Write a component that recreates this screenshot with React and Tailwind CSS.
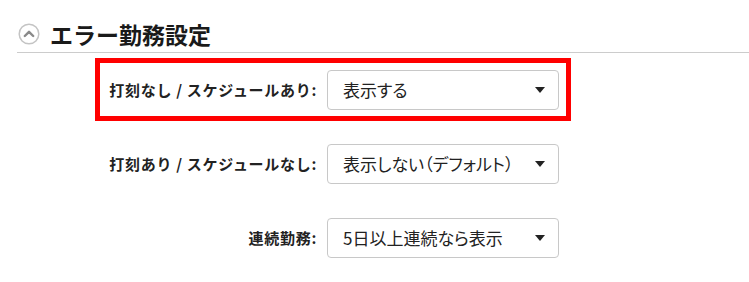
import React from "react";

const font = { fontFamily: '"Noto Sans CJK JP", "Noto Sans", sans-serif' };

function Caret() {
  return (
    <svg width="10" height="6" viewBox="0 0 10 6" className="shrink-0">
      <path d="M0 0 L10 0 L5 6 Z" fill="#222" />
    </svg>
  );
}

function Row({ label, value, highlight }) {
  return (
    <div
      className={`flex items-center w-[476px] h-[63px] border-[5px] ${
        highlight ? "border-[#ff0000]" : "border-transparent"
      }`}
    >
      <div className="w-[217px] shrink-0 text-right text-[15px] font-bold text-[#222] leading-none tracking-[0.7px] whitespace-nowrap">
        {label}
      </div>
      <div className="ml-[10px] w-[232px] h-[40px] shrink-0 flex items-center justify-between pl-[15px] pr-[13px] border border-[#c8c8c8] rounded-[4px] bg-white">
        <span className="text-[17px] text-[#222] leading-none whitespace-nowrap [font-feature-settings:'palt']">
          {value}
        </span>
        <Caret />
      </div>
    </div>
  );
}

export default function App() {
  return (
    <div className="w-[749px] h-[282px] bg-white overflow-hidden" style={font}>
      <div className="ml-[17px] pt-[20px] pb-[4px] border-b border-[#cccccc]">
        <div className="flex items-center h-[28px]">
          <svg width="22" height="22" viewBox="0 0 22 22" className="ml-[1px] shrink-0">
            <circle cx="11" cy="11" r="9.8" fill="none" stroke="#c4c4c4" strokeWidth="1.5" />
            <path d="M6.8 13 L11 8.8 L15.2 13" fill="none" stroke="#8a8a8a" strokeWidth="2.4" strokeLinecap="round" strokeLinejoin="round" />
          </svg>
          <span className="ml-[10px] text-[23px] font-bold text-[#1a1a1a] leading-none whitespace-nowrap">
            エラー勤務設定
          </span>
        </div>
      </div>
      <div className="ml-[95px] mt-[5px] flex flex-col gap-[11px]">
        <Row label="打刻なし / スケジュールあり:" value="表示する" highlight />
        <Row label="打刻あり / スケジュールなし:" value="表示しない（デフォルト）" />
        <Row label="連続勤務:" value="5日以上連続なら表示" />
      </div>
    </div>
  );
}
